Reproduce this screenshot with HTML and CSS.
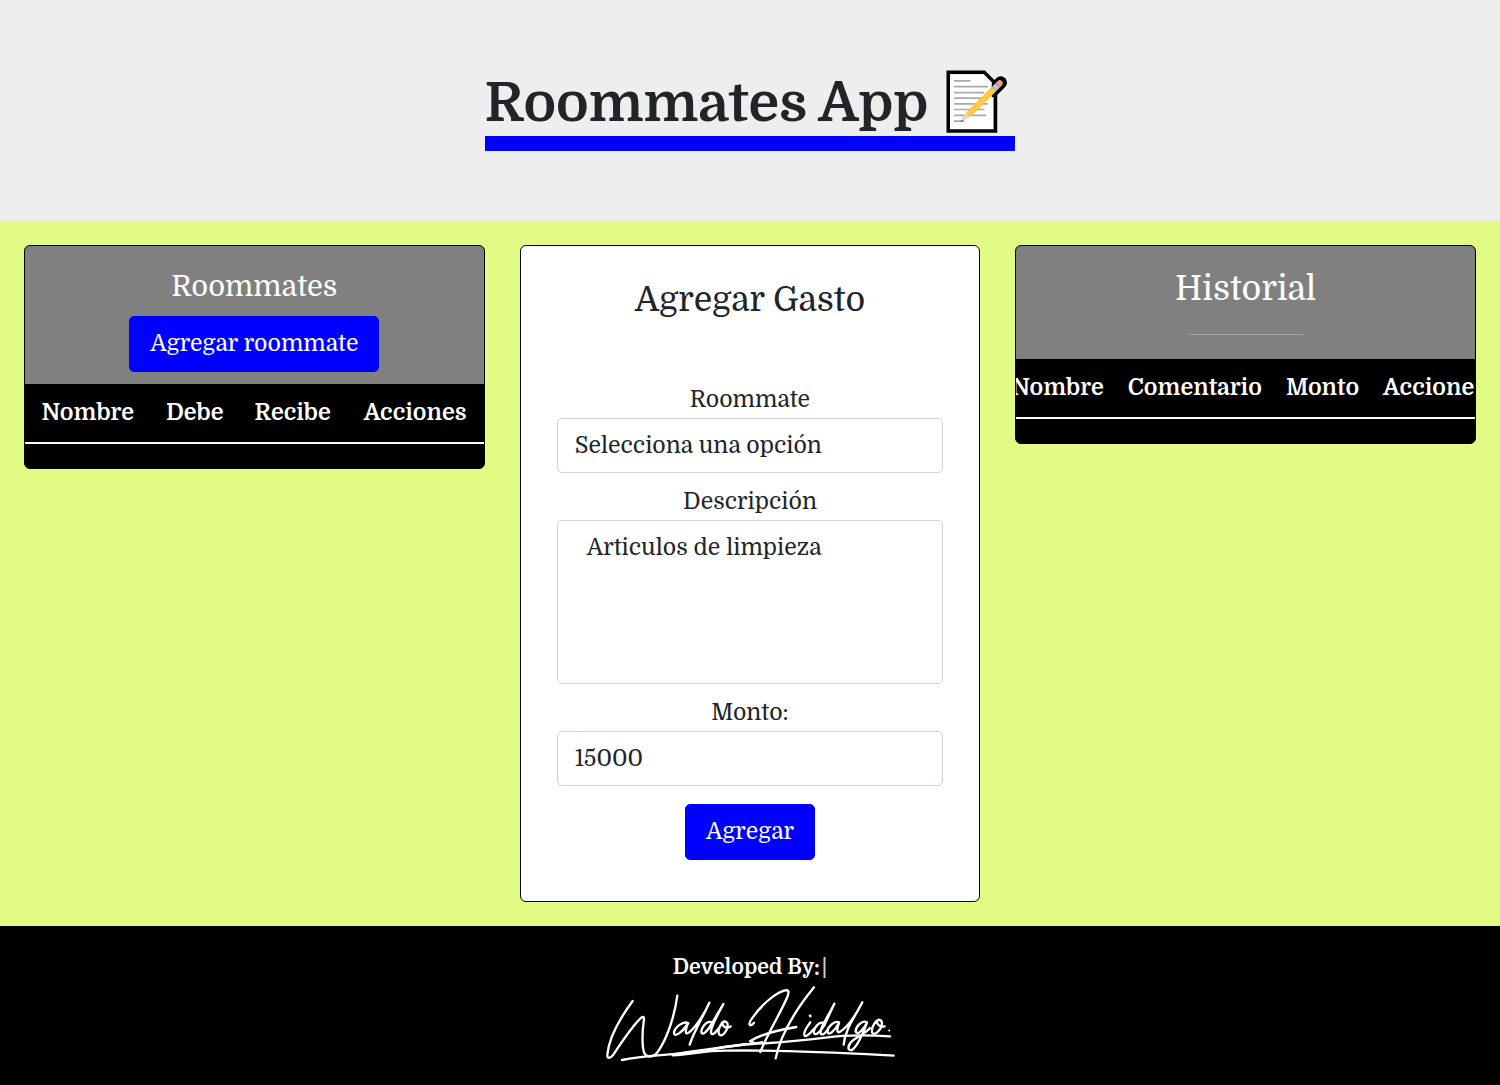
FILE: index.html
```html
<!DOCTYPE html>
<html lang="es">
<head>
<meta charset="utf-8">
<meta name="viewport" content="width=device-width, initial-scale=1">
<title>Roommates App</title>
<link rel="stylesheet" href="styles.css">
</head>
<body>
<header class="hero">
  <h1 class="hero-title">Roommates App
    <svg class="memo" viewBox="0 0 190 190" aria-hidden="true">
      <path d="M7 7h108l34 34v143H7z" fill="#fff" stroke="#000" stroke-width="11"/>
      <path d="M165 38 140 63" stroke="#000" stroke-width="38" stroke-linecap="round"/>
      <path d="M138 70v108H13V13h100l25 25z" fill="#fff"/>
      <path d="M113 13v25h25z" fill="#f2f2f2"/>
      <path d="M24 33h50M24 50h103M24 68h91M24 85h97M24 102h103M24 119h91M24 137h97M24 154h32" stroke="#aaa" stroke-width="5" fill="none"/>
      <path d="M61 128 139 50l13 13-78 78z" fill="#fdc43f"/>
      <path d="M68 135 146 57" stroke="#ffcf55" stroke-width="5"/>
      <path d="m61 128 13 13-25 12-4-2z" fill="#f4cfc0"/>
      <path d="m47 151-4 6 9-4z" fill="#555"/>
      <path d="m139 50 11-11 13 13-11 11z" fill="#bdbdc4"/>
      <path d="m150 39 6-6c8-8 21 5 13 13l-6 6z" fill="#f29b8c"/>
    </svg>
  </h1>
</header>

<main class="board">
  <section class="card">
    <div class="card-head">
      <h3 class="card-title">Roommates</h3>
      <button class="btn" type="button">Agregar roommate</button>
    </div>
    <div class="table-wrap">
      <table class="table">
        <thead><tr><th>Nombre</th><th>Debe</th><th>Recibe</th><th>Acciones</th></tr></thead>
        <tbody></tbody>
      </table>
    </div>
  </section>

  <section class="card card-form">
    <h2 class="form-title">Agregar Gasto</h2>
    <form class="form">
      <div class="field">
        <label for="roommate">Roommate</label>
        <select class="control" id="roommate"><option>Selecciona una opción</option></select>
      </div>
      <div class="field">
        <label for="descripcion">Descripción</label>
        <textarea class="control control-area" id="descripcion">Articulos de limpieza</textarea>
      </div>
      <div class="field">
        <label for="monto">Monto:</label>
        <input class="control" id="monto" type="text" inputmode="numeric" value="15000">
      </div>
      <button class="btn btn-submit" type="button">Agregar</button>
    </form>
  </section>

  <section class="card">
    <div class="card-head card-head-history">
      <h2 class="history-title">Historial</h2>
      <hr class="rule">
    </div>
    <div class="table-wrap table-wrap-history">
      <table class="table">
        <thead><tr><th>Nombre</th><th>Comentario</th><th>Monto</th><th>Acciones</th></tr></thead>
        <tbody></tbody>
      </table>
    </div>
  </section>
</main>

<footer class="footer">
  <p class="credit">Developed By:<span class="caret">|</span></p>
  <svg class="signature" viewBox="15 15 876 234" role="img" aria-label="Waldo Hidalgo">
    <g fill="none" stroke="#fff" stroke-width="7" stroke-linecap="round" stroke-linejoin="round">
      <path d="M101 63C70 105 30 170 25 224c-1 14 9 11 18 0 24-36 58-88 84-111 8-6 9 0 7 12-6 42-4 88 4 98 9 11 28 8 37-6 27-36 51-104 60-170"/>
      <path d="M268 130c-14-9-42 12-43 29 0 14 23 0 41-27-8 20-8 34 3 26 18-13 49-58 62-90-19 42-47 88-59 126"/>
      <path d="M335 126c-14-3-29 19-28 31 3 12 20-6 30-24 14-22 25-43 36-61-17 34-43 75-36 89 5 5 15-6 23-17"/>
      <path d="M378 124c-14 5-24 29-17 40 9 9 24-12 25-28 0-12-11-15-18-7 6 14 16 18 27 10"/>
      <path d="M69 240c60-12 110-13 175-20 85-8 145-24 216-28 80-4 150-10 220-19 70-10 130-8 193-4"/>
      <path d="M221 226c60-2 85-14 160-14 180-3 370 8 503 15"/>
      <path d="M222 223c70-12 130-18 220-31"/>
      <g transform="translate(420 0)">
        <path d="M45 128c-12 15-20 6-6-13 26-37 66-74 96-83 14-4 16 2 11 16-18 46-58 108-82 168"/>
        <path d="M225 22c-44 54-98 130-115 213"/>
        <path d="M172 141c-60 10-111 24-139 43 9 6 24 6 36 2"/>
        <path d="M214 127c-12 16-23 35-16 41 7 2 18-11 27-22"/>
        <path d="M213 107l1 1" stroke-width="8"/>
        <path d="M252 128c-14-3-30 19-27 31 3 11 20-5 31-23l30-65c-16 35-48 77-40 91 6 5 15-6 21-14"/>
        <path d="M300 127c-14-6-36 15-34 30 3 12 20-4 34-28-7 18-7 31 2 27 22-13 48-50 68-89-20 41-52 79-56 127"/>
        <path d="M383 126c-15-5-34 15-33 29 4 12 22-4 34-27-10 29-30 73-45 82-15 4-14-15 2-28 18-14 37-21 52-38"/>
        <path d="M420 119c-15 6-26 31-19 41 10 7 28-15 28-30 0-11-11-13-17-5 5 12 13 17 25 14"/>
        <path d="M450 151l1 1" stroke-width="5"/>
      </g>
    </g>
  </svg>
</footer>
</body>
</html>
```
FILE: styles.css
```css
* { box-sizing: border-box; }

body {
  margin: 0;
  min-height: 100vh;
  display: flex;
  flex-direction: column;
  background: #000;
  color: #212529;
  font-family: "Domine", "DejaVu Serif Condensed", "DejaVu Serif", serif;
  font-size: 23px;
  line-height: 36px;
}

h1, h2, h3, p { margin: 0; font-weight: 500; }

.hero {
  display: flex;
  justify-content: center;
  padding: 70px 24px;
  background: #eee;
}

.hero-title {
  display: flex;
  align-items: flex-start;
  gap: 18px;
  padding-right: 6px;
  border-bottom: 15px solid #00f;
  font-size: 55px;
  font-weight: 600;
  line-height: 66px;
}

.memo { width: 63px; height: 63px; fill: none; }

.board {
  display: grid;
  grid-template-columns: repeat(3, minmax(0, 1fr));
  align-items: start;
  gap: 35px;
  padding: 24px;
  background: #e2fb84;
}

.card {
  overflow: hidden;
  border: 1px solid #000;
  border-radius: 6px;
  background: #000;
  text-align: center;
}

.card-head {
  display: flex;
  flex-direction: column;
  align-items: center;
  gap: 12px;
  padding: 24px 0 12px;
  background: #808080;
  color: #fff;
}

.card-title { font-size: 29px; line-height: 34px; }

.card-head-history { gap: 27px; padding-bottom: 24px; }

.history-title, .form-title { font-size: 34px; }

.history-title { line-height: 37px; }

.form-title { line-height: 40px; }

.rule {
  width: 25%;
  margin: 0;
  border: 0;
  border-top: 1px solid #a0a0a0;
}

.btn {
  padding: 9px 20px;
  border: 1px solid #00f;
  border-radius: 5px;
  background: #00f;
  color: #fff;
  font: inherit;
}

.table-wrap {
  display: flex;
  justify-content: center;
  padding-bottom: 24px;
}

.table-wrap-history { padding-left: 6px; }

.table {
  flex: 1 0 auto;
  border-collapse: collapse;
  color: #fff;
}

.table th {
  padding: 11px 12px;
  border-bottom: 2px solid #fff;
  font-weight: 700;
  white-space: nowrap;
}

.card-form {
  padding: 34px 36px 41px;
  background: #fff;
}

.form {
  display: flex;
  flex-direction: column;
  gap: 11px;
  margin-top: 62px;
}

.field { display: flex; flex-direction: column; }

.control {
  width: 100%;
  height: 55px;
  padding: 8px 17px;
  border: 1px solid #ced4da;
  border-radius: 5px;
  background: #fff;
  color: #212529;
  font: inherit;
  appearance: none;
}

.control-area {
  display: block;
  height: 164px;
  padding: 9px 17px 9px 29px;
  resize: none;
}

.btn-submit { align-self: center; margin-top: 7px; }

.footer {
  display: flex;
  flex-direction: column;
  align-items: center;
  padding: 24px 24px 22px;
  background: #000;
  color: #fff;
}

.credit {
  font-size: 21px;
  font-weight: 700;
  line-height: 35px;
}

.caret { margin-left: 2px; color: #ccc; }

.signature { width: 292px; height: 78px; }
```
